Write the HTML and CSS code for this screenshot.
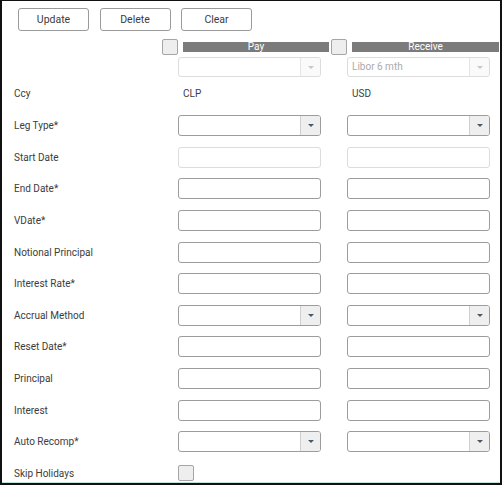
FILE: index.html
```html
<!DOCTYPE html>
<html>
<head>
<meta charset="utf-8">
<link rel="stylesheet" href="styles.css">
</head>
<body>
<div class="panel">
  <div class="buttons">
    <button class="btn">Update</button>
    <button class="btn">Delete</button>
    <button class="btn">Clear</button>
  </div>
  <div class="legs">
    <span class="check"></span>
    <div class="legbar pay">Pay</div>
    <span class="check"></span>
    <div class="legbar recv">Receive</div>
  </div>
  <div class="row top">
    <div class="label"></div>
    <div class="field select disabled"><span class="val"></span><span class="arrow"><i></i></span></div>
    <div class="field select disabled"><span class="val">Libor 6 mth</span><span class="arrow"><i></i></span></div>
  </div>
  <div class="row ccy">
    <div class="label">Ccy</div>
    <div class="text">CLP</div>
    <div class="text">USD</div>
  </div>
  <div class="row">
    <div class="label">Leg Type*</div>
    <div class="field select"><span class="val"></span><span class="arrow"><i></i></span></div>
    <div class="field select"><span class="val"></span><span class="arrow"><i></i></span></div>
  </div>
  <div class="row">
    <div class="label">Start Date</div>
    <div class="field disabled"></div>
    <div class="field disabled"></div>
  </div>
  <div class="row">
    <div class="label">End Date*</div>
    <div class="field"></div>
    <div class="field"></div>
  </div>
  <div class="row">
    <div class="label">VDate*</div>
    <div class="field"></div>
    <div class="field"></div>
  </div>
  <div class="row">
    <div class="label">Notional Principal</div>
    <div class="field"></div>
    <div class="field"></div>
  </div>
  <div class="row">
    <div class="label">Interest Rate*</div>
    <div class="field"></div>
    <div class="field"></div>
  </div>
  <div class="row">
    <div class="label">Accrual Method</div>
    <div class="field select"><span class="val"></span><span class="arrow"><i></i></span></div>
    <div class="field select"><span class="val"></span><span class="arrow"><i></i></span></div>
  </div>
  <div class="row">
    <div class="label">Reset Date*</div>
    <div class="field"></div>
    <div class="field"></div>
  </div>
  <div class="row">
    <div class="label">Principal</div>
    <div class="field"></div>
    <div class="field"></div>
  </div>
  <div class="row">
    <div class="label">Interest</div>
    <div class="field"></div>
    <div class="field"></div>
  </div>
  <div class="row">
    <div class="label">Auto Recomp*</div>
    <div class="field select"><span class="val"></span><span class="arrow"><i></i></span></div>
    <div class="field select"><span class="val"></span><span class="arrow"><i></i></span></div>
  </div>
  <div class="row last">
    <div class="label">Skip Holidays</div>
    <span class="check"></span>
  </div>
</div>
</body>
</html>
```
FILE: styles.css
```css
* { box-sizing: border-box; }
html, body { margin: 0; padding: 0; background: #fff; }
body {
  font-family: Roboto, "Liberation Sans", Arial, sans-serif;
  font-size: 10px;
  color: #3c3c3c;
}
.panel {
  width: 502px;
  height: 485px;
  border-top: 1px solid #111;
  border-left: 2px solid #111;
  border-right: 2px solid #111;
  border-bottom: 2px solid #111;
  box-shadow: inset 0 -1px 0 #bfe3dc;
  overflow: hidden;
}
.buttons {
  display: flex;
  gap: 10.5px;
  padding: 7px 0 0 16px;
}
.btn {
  width: 71px;
  height: 23px;
  background: #fff;
  border: 1px solid #9a9a9a;
  border-radius: 3px;
  font-family: Roboto, "Liberation Sans", Arial, sans-serif;
  font-size: 10.5px;
  color: #3c3c3c;
  padding: 0;
  flex: none;
}
.legs {
  display: flex;
  align-items: center;
  margin-top: 8px;
  padding-left: 160px;
  height: 16px;
}
.check {
  display: block;
  width: 16px;
  height: 16px;
  background: #eeeeee;
  border: 1px solid #a5a5a5;
  border-radius: 2px;
  flex: none;
}
.legbar {
  height: 10px;
  margin-top: -1px;
  background: #7b7b7b;
  color: #fff;
  font-size: 10px;
  line-height: 10px;
  text-align: center;
  flex: none;
}
.legbar.pay { width: 146px; margin-left: 5px; margin-right: 2px; }
.legbar.recv { width: 147px; margin-left: 5px; }
.row {
  display: flex;
  align-items: center;
  height: 31.6px;
}
.row.top { height: 20px; margin-top: 2px; }
.row.ccy { height: 33px; }
.label {
  width: 176px;
  padding-left: 12px;
  flex: none;
}
.text {
  width: 143px;
  margin-right: 26px;
  padding-left: 5px;
  flex: none;
}
.field {
  width: 143px;
  height: 21px;
  margin-right: 26px;
  border: 1px solid #9c9c9c;
  border-radius: 3px;
  background: #fff;
  display: flex;
  flex: none;
  overflow: hidden;
}
.row.top .field { height: 20px; }
.field.disabled { border-color: #dcdcdc; }
.val {
  flex: 1;
  padding-left: 4px;
  line-height: 18px;
  color: #aaa;
}
.arrow {
  width: 20px;
  background: #efefef;
  border-left: 1px solid #cfcfcf;
  display: flex;
  align-items: center;
  justify-content: center;
}
.arrow i {
  display: block;
  width: 0;
  height: 0;
  border-left: 3.5px solid transparent;
  border-right: 3.5px solid transparent;
  border-top: 3.5px solid #4b5866;
}
.disabled .arrow { background: #fafafa; border-left-color: #e6e6e6; }
.disabled .arrow i { border-top-color: #c8c8c8; }
```
